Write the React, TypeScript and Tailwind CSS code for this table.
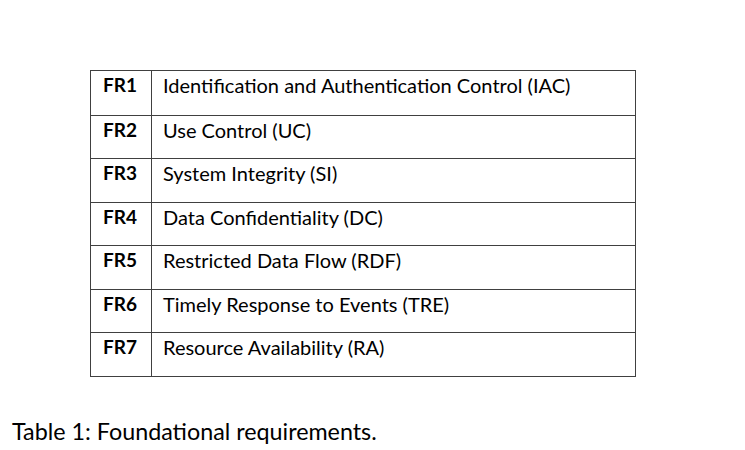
import React from "react";

const rows: [string, string][] = [
  ["FR1", "Identification and Authentication Control (IAC)"],
  ["FR2", "Use Control (UC)"],
  ["FR3", "System Integrity (SI)"],
  ["FR4", "Data Confidentiality (DC)"],
  ["FR5", "Restricted Data Flow (RDF)"],
  ["FR6", "Timely Response to Events (TRE)"],
  ["FR7", "Resource Availability (RA)"],
];

export default function App() {
  return (
    <div
      className="w-[745px] h-[450px] bg-white text-black overflow-hidden"
      style={{ fontFamily: "Lato, 'Open Sans', sans-serif" }}
    >
      <div className="pt-[70px] pl-[90px]">
        <div className="w-[546px] border border-[#404040]">
          {rows.map(([id, label], i) => (
            <div
              key={id}
              className={`flex h-[43.5px] ${i > 0 ? "border-t border-[#404040]" : ""}`}
            >
              <div className="w-[61px] shrink-0 border-r border-[#404040] pl-[12px] pt-[2px] font-bold text-[19px] leading-[24px]">
                {id}
              </div>
              <div className="pl-[11px] pt-[2px] text-[20px] leading-[24px]">{label}</div>
            </div>
          ))}
        </div>
      </div>
      <div className="pl-[12px] pt-[40px] text-[23.3px] leading-[28px]">
        Table 1: Foundational requirements.
      </div>
    </div>
  );
}
